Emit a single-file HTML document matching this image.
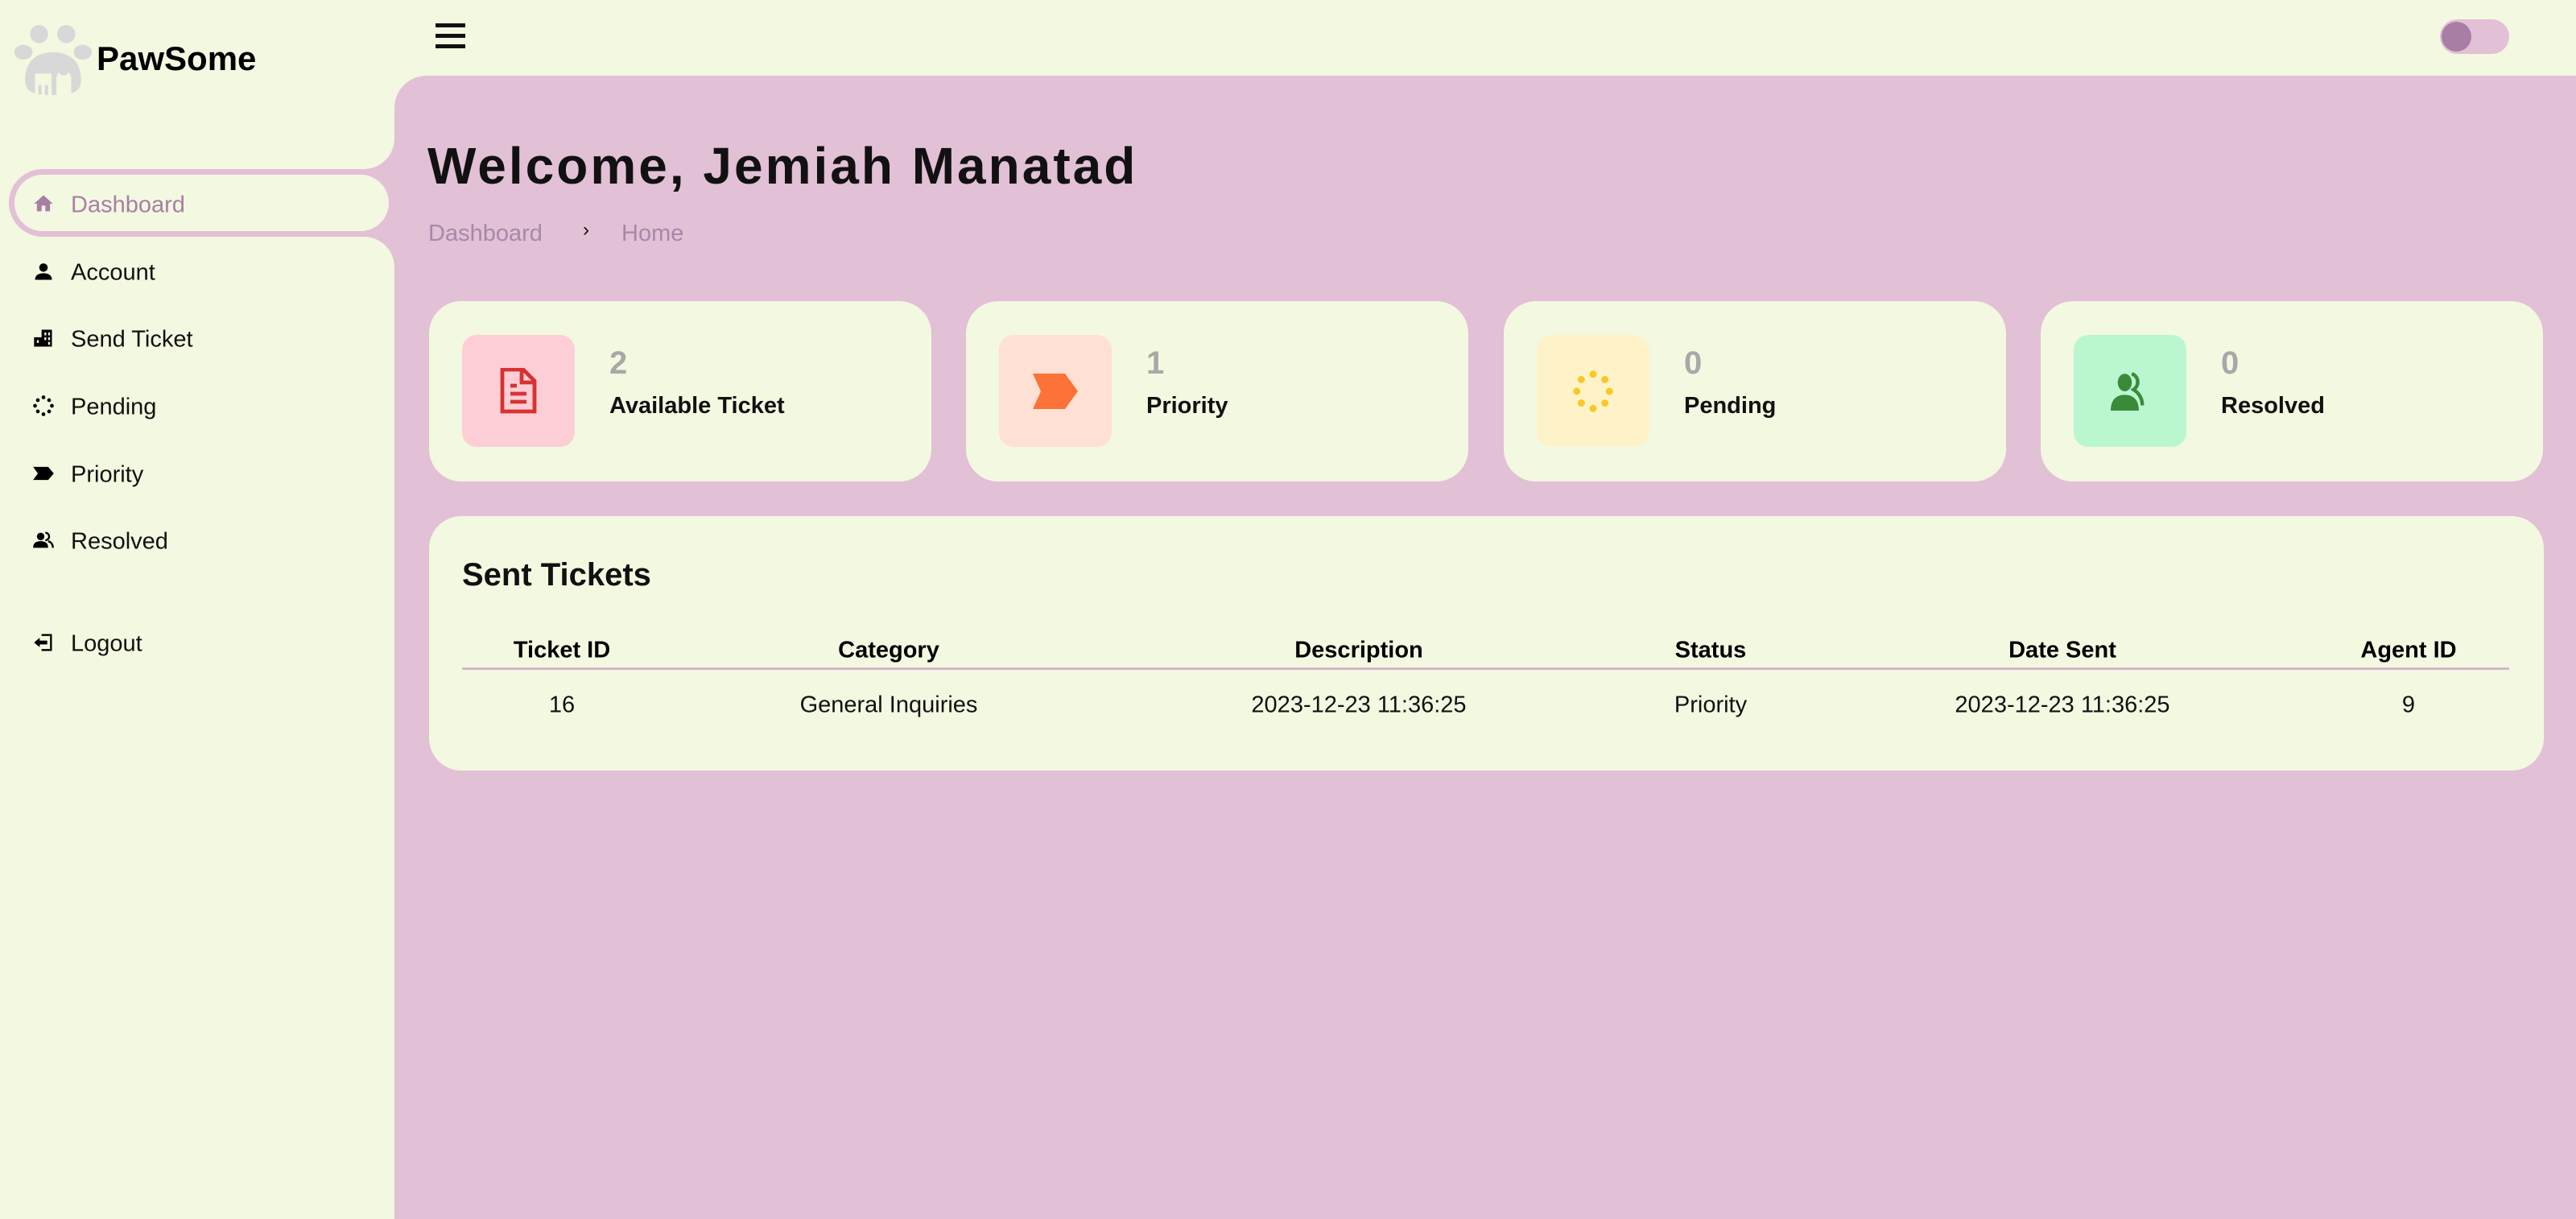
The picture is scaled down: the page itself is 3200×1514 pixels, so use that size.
<!DOCTYPE html>
<html><head><meta charset="utf-8"><style>
*{margin:0;padding:0;box-sizing:border-box}
body{width:3200px;height:1514px;background:#f3f8e1;font-family:"Liberation Sans",sans-serif;position:relative;overflow:hidden}
.abs{position:absolute}
.main{left:490px;top:94px;width:2710px;height:1420px;background:#e2c0d6;border-top-left-radius:40px}
.nav{left:88px;font-size:29px;color:#111;transform:translateY(-50%);margin-top:2px}
.ico{left:40px;width:28px;height:28px;transform:translateY(-50%)}
.card{background:#f3f8e1;border-radius:40px;height:224px;top:374px;width:624px}
.ib{position:absolute;left:41px;top:42px;width:140px;height:139px;border-radius:18px;display:flex;align-items:center;justify-content:center}
.num{position:absolute;left:224px;top:55px;font-size:40px;font-weight:bold;color:#a8a8a8}
.lbl{position:absolute;left:224px;top:114px;font-size:29px;font-weight:bold;color:#111}
.th{top:808px;font-size:29px;font-weight:bold;transform:translate(-50%,-50%);white-space:nowrap}
.td{top:876px;font-size:29px;transform:translate(-50%,-50%);white-space:nowrap;color:#111}
</style></head><body>
<!-- logo -->
<svg class="abs" style="left:16px;top:28px" width="104" height="90" viewBox="0 0 100 88">
<g fill="#d8d8d8"><ellipse cx="12" cy="36" rx="11" ry="9"/><ellipse cx="31" cy="14" rx="11" ry="11"/><ellipse cx="64" cy="14" rx="11" ry="11"/><ellipse cx="84" cy="36" rx="11" ry="9"/><path d="M14 70 C14 45 30 36 48 36 C66 36 82 45 82 70 C82 85 70 88 48 88 C26 88 14 85 14 70Z"/></g>
<g fill="#f3f8e1"><path d="M26 62 h20 v26 h-4 v-12 h-4 v12 h-4 v-12 h-4 v12 h-4z"/><path d="M52 66 l3-6 3 4 h6 l3-4 3 6 v22 h-18z"/></g></svg>
<div class="abs" style="left:120px;top:49px;font-size:42px;font-weight:bold;color:#000">PawSome</div>
<!-- hamburger -->
<div class="abs" style="left:541px;top:29px;width:37px;height:5px;background:#111"></div>
<div class="abs" style="left:541px;top:42px;width:37px;height:5px;background:#111"></div>
<div class="abs" style="left:541px;top:55px;width:37px;height:5px;background:#111"></div>
<!-- toggle -->
<div class="abs" style="left:3031px;top:24px;width:86px;height:43px;border-radius:22px;background:#e2c0d6"></div>
<div class="abs" style="left:3033px;top:27px;width:37px;height:37px;border-radius:50%;background:#a97ea6"></div>
<div class="abs main"></div>
<!-- active tab connector -->
<div class="abs" style="left:430px;top:150px;width:60px;height:190px;background:#e2c0d6"></div>
<div class="abs" style="left:380px;top:100px;width:110px;height:110px;background:#f3f8e1;border-bottom-right-radius:38px"></div>
<div class="abs" style="left:380px;top:294px;width:110px;height:110px;background:#f3f8e1;border-top-right-radius:38px"></div>
<div class="abs" style="left:11px;top:210px;width:479px;height:84px;background:#e2c0d6;border-radius:42px 0 0 42px"></div>
<div class="abs" style="left:18px;top:217px;width:465px;height:70px;background:#f3f8e1;border-radius:35px"></div>
<!-- nav -->
<svg class="abs ico" style="top:253px" viewBox="0 0 24 24"><path fill="#a97ea6" d="M12 3 L2 12 h3 v8 h5 v-6 h4 v6 h5 v-8 h3z"/></svg>
<div class="abs nav" style="top:253px;color:#a97ea6">Dashboard</div>
<svg class="abs ico" style="top:337px" viewBox="0 0 24 24"><circle cx="12" cy="8" r="4.5"/><path d="M3 21 c0-5 4-7 9-7 s9 2 9 7z"/></svg>
<div class="abs nav" style="top:337px">Account</div>
<svg class="abs ico" style="top:420px" viewBox="0 0 24 24"><path d="M10 3h11v18H2v-10h8z M13 6v3h2V6z M17 6v3h2V6z M13 11v3h2v-3z M17 11v3h2v-3z M5 14v3h2v-3z M17 16v3h2v-3z" fill-rule="evenodd"/></svg>
<div class="abs nav" style="top:420px">Send Ticket</div>
<svg class="abs ico" style="top:504px" viewBox="0 0 24 24"><g><circle cx="12" cy="3" r="2"/><circle cx="18" cy="6" r="2"/><circle cx="21" cy="12" r="2"/><circle cx="18" cy="18" r="2"/><circle cx="12" cy="21" r="2"/><circle cx="6" cy="18" r="2"/><circle cx="3" cy="12" r="2"/><circle cx="6" cy="6" r="2"/></g></svg>
<div class="abs nav" style="top:504px">Pending</div>
<svg class="abs ico" style="top:588px" viewBox="0 0 24 24"><path d="M1 5h16l6 7-6 7H1l5-7z"/></svg>
<div class="abs nav" style="top:588px">Priority</div>
<svg class="abs ico" style="top:671px" viewBox="0 0 24 24"><circle cx="9" cy="8" r="4"/><path d="M1 20c0-5 3-7 8-7s8 2 8 7z"/><path d="M14 4a4 4 0 0 1 0 8M17 13c3 1 5 3 5 7" stroke="#000" stroke-width="2" fill="none"/></svg>
<div class="abs nav" style="top:671px">Resolved</div>
<svg class="abs ico" style="top:798px" viewBox="0 0 24 24"><path d="M10 3h11v18H10v-2h9V5h-9z M2 12l6-5v3h8v4H8v3z"/></svg>
<div class="abs nav" style="top:798px">Logout</div>
<!-- title -->
<div class="abs" style="left:531px;top:169px;font-size:64px;font-weight:bold;color:#111;letter-spacing:3px">Welcome, Jemiah Manatad</div>
<div class="abs" style="left:532px;top:274px;font-size:29px;color:#a788a8">Dashboard</div>
<div class="abs" style="left:724px;top:272px;font-size:24px;color:#111">›</div>
<div class="abs" style="left:772px;top:274px;font-size:29px;color:#a788a8">Home</div>
<!-- cards -->
<div class="abs card" style="left:533px"><div class="ib" style="background:#fdced6"><svg width="48" height="58" viewBox="0 0 24 29"><path d="M2 1h13l7 7v19H2z" fill="none" stroke="#d83232" stroke-width="2.4"/><path d="M14 1v8h8" fill="none" stroke="#d83232" stroke-width="2.4"/><path d="M7 11h4M7 16h10M7 21h10" stroke="#d83232" stroke-width="2.4"/></svg></div><div class="num">2</div><div class="lbl">Available Ticket</div></div>
<div class="abs card" style="left:1200px"><div class="ib" style="background:#fee0d4"><svg width="56" height="44" viewBox="0 0 28 22"><path d="M0 0h20l8 11-8 11H0l5-11z" fill="#fd7237"/></svg></div><div class="num">1</div><div class="lbl">Priority</div></div>
<div class="abs card" style="left:1868px"><div class="ib" style="background:#fef3c8"><svg width="54" height="54" viewBox="0 0 24 24" fill="#fac825"><circle cx="12" cy="2.5" r="2"/><circle cx="18.5" cy="5.5" r="2"/><circle cx="21" cy="12" r="2"/><circle cx="18.5" cy="18.5" r="2"/><circle cx="12" cy="21.5" r="2"/><circle cx="5.5" cy="18.5" r="2"/><circle cx="3" cy="12" r="2"/><circle cx="5.5" cy="5.5" r="2"/></svg></div><div class="num">0</div><div class="lbl">Pending</div></div>
<div class="abs card" style="left:2535px"><div class="ib" style="background:#baf7d0"><svg width="54" height="48" viewBox="0 0 24 22" fill="#3a8a3a"><ellipse cx="9" cy="6" rx="4" ry="5"/><path d="M1 22c0-6 3-9 8-9s8 3 8 9z"/><path d="M13 1a5 5 0 0 1 1 9c3 2 5 5 5 9" stroke="#3a8a3a" stroke-width="2" fill="none"/></svg></div><div class="num">0</div><div class="lbl">Resolved</div></div>
<!-- table -->
<div class="abs" style="left:533px;top:641px;width:2627px;height:316px;background:#f3f8e1;border-radius:40px"></div>
<div class="abs" style="left:574px;top:692px;font-size:40px;font-weight:bold;color:#111">Sent Tickets</div>
<div class="abs" style="left:574px;top:829px;width:2543px;height:3px;background:#d7b6cc"></div>
<div class="abs th" style="left:698px">Ticket ID</div>
<div class="abs th" style="left:1104px">Category</div>
<div class="abs th" style="left:1688px">Description</div>
<div class="abs th" style="left:2125px">Status</div>
<div class="abs th" style="left:2562px">Date Sent</div>
<div class="abs th" style="left:2992px">Agent ID</div>
<div class="abs td" style="left:698px">16</div>
<div class="abs td" style="left:1104px">General Inquiries</div>
<div class="abs td" style="left:1688px">2023-12-23 11:36:25</div>
<div class="abs td" style="left:2125px">Priority</div>
<div class="abs td" style="left:2562px">2023-12-23 11:36:25</div>
<div class="abs td" style="left:2992px">9</div>
</body></html>
